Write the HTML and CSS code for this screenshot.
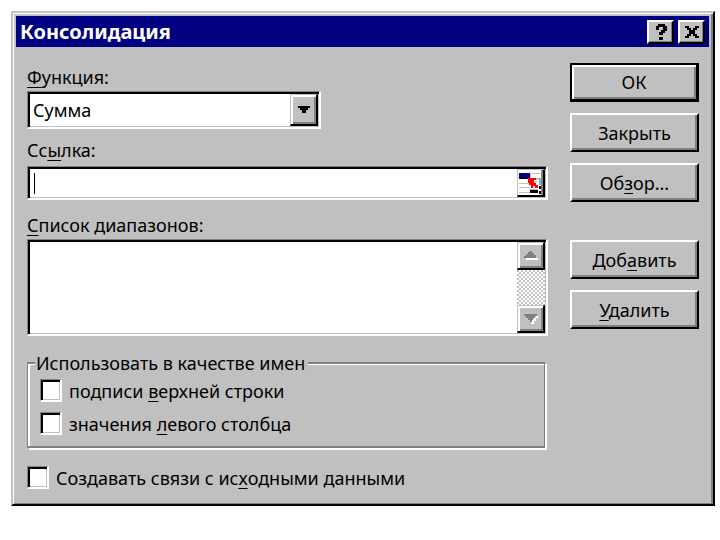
FILE: index.html
```html
<!DOCTYPE html>
<html lang="ru">
<head>
  <meta charset="utf-8">
  <title>Консолидация</title>
  <link rel="stylesheet" href="styles.css">
</head>
<body>
  <form class="window">
    <div class="titlebar">
      <h1 class="title">Консолидация</h1>
      <button type="button" class="title-button" aria-label="Справка">
        <svg width="12" height="16" viewBox="0 0 12 16"><path d="M1 2h2V0h7v2h2v5h-2v2H8v2H4V8h2V6h2V3H4v3H1zM4 13h4v3H4z"/></svg>
      </button>
      <button type="button" class="title-button" aria-label="Закрыть окно">
        <svg width="14" height="12" viewBox="0 0 14 12"><path d="M0 0h4v2h2v2h2V2h2V0h4v2h-2v2h-2v4h2v2h2v2h-4v-2H8V8H6v2H4v2H0v-2h2V8h2V4H2V2H0z"/></svg>
      </button>
    </div>

    <div class="content">
      <div class="fields">
        <label class="label" for="func"><u>Ф</u>ункция:</label>
        <div class="sunken combo">
          <select id="func" class="combo-select">
            <option>Сумма</option>
          </select>
          <button type="button" class="small-button combo-button" aria-label="Открыть список">
            <svg width="12" height="7" viewBox="0 0 12 7"><path d="M0 0h12v2h-2v2H8v3H4V4H2V2H0z"/></svg>
          </button>
        </div>

        <label class="label" for="ref">Сс<u>ы</u>лка:</label>
        <div class="sunken ref">
          <span class="caret"></span>
          <input type="text" id="ref" class="ref-input">
          <button type="button" class="small-button ref-button" aria-label="Свернуть диалог">
            <svg width="25" height="25" viewBox="0 0 25 25">
              <path fill="#fff" d="M0 0h25v25H0z"/>
              <path fill="#000080" d="M1 3h11v5H1z"/>
              <path fill="#000" d="M1 8h11v1H1z"/>
              <path fill="#c0c0c0" d="M1 13h9v1H1zM1 17h11v1H1zM1 22h11v1H1zM12 3h1v6h-1zM14 3h8v1h-8zM18 8h3v2h-3zM11 19h9v1h-9z"/>
              <path fill="#f00" d="M10 8h8v2h-2v3h2v2h2v3h-3v-2h-2v2h-2v-3h-2v-2h-1z"/>
              <path fill="#80c0b0" d="M21 8h2v7h-2zM17 11h2v1h-2z"/>
              <path fill="#000" d="M12 20h8v3h-8zM21 16h2v3h-2zM21 21h2v3h-2z"/>
              <path fill="#808080" d="M23 0h2v25h-2z"/>
            </svg>
          </button>
        </div>

        <label class="label" for="ranges"><u>С</u>писок диапазонов:</label>
        <div class="sunken list">
          <select id="ranges" class="list-select" size="4"></select>
          <div class="scrollbar">
            <button type="button" class="small-button scroll-button" aria-label="Вверх">
              <svg width="14" height="9" viewBox="0 0 14 9"><path fill="#fff" d="M2 7h12v2H2z"/><path fill="#808080" d="M6 0h2v2h2v2h2v3H0V5h2V3h2V1h2z"/></svg>
            </button>
            <button type="button" class="small-button scroll-button" aria-label="Вниз">
              <svg width="14" height="10" viewBox="0 0 14 10"><path fill="#fff" d="M12 2h2v2h-2v3h-2v3H7V7z"/><path fill="#808080" d="M0 0h13v2h-2v2H9v2H8v2H6V6H4V4H2V2H0z"/></svg>
            </button>
          </div>
        </div>

        <fieldset class="group">
          <legend class="legend">Использовать в качестве имен</legend>
          <label class="check"><input type="checkbox" class="sunken box">подписи <u>в</u>ерхней строки</label>
          <label class="check"><input type="checkbox" class="sunken box">значения <u>л</u>евого столбца</label>
        </fieldset>

        <label class="check"><input type="checkbox" class="sunken box">Создавать связи с ис<u>х</u>одными данными</label>
      </div>

      <div class="buttons">
        <button type="submit" class="button default">ОК</button>
        <button type="button" class="button">Закрыть</button>
        <button type="button" class="button">Об<u>з</u>ор...</button>
        <button type="button" class="button add">Доб<u>а</u>вить</button>
        <button type="button" class="button"><u>У</u>далить</button>
      </div>
    </div>
  </form>
</body>
</html>
```

FILE: styles.css
```css
*{
  box-sizing: border-box;
}
body{
  margin: 11px 5px 0 11px;
  background-color: #fff;
  color: #000;
  font: 18px/24px "Noto Sans", "DejaVu Sans", sans-serif;
}
button, input, select{
  margin: 0;
  padding: 0;
  border: 0;
  border-radius: 0;
  outline: 0;
  appearance: none;
  color: #000;
  font: inherit;
}
button{
  background-color: #c0c0c0;
}
svg{
  display: block;
  flex: none;
  shape-rendering: crispEdges;
}
u{
  text-decoration-thickness: 1px;
  text-underline-offset: 3px;
}
.window{
  padding: 3px 2px 14px 3px;
  border: 2px solid;
  border-color: #c0c0c0 #000 #000 #c0c0c0;
  background-color: #c0c0c0;
  box-shadow: inset 1px 1px 0 #fff, inset -2px -1px 0 #808080;
}

/* title */
.titlebar{
  display: flex;
  align-items: center;
  gap: 4px;
  height: 31px;
  margin-right: 2px;
  padding: 0 4px;
  background-color: #000080;
}
.title{
  flex: 1;
  margin: 0;
  color: #fff;
  font-size: 20px;
  font-weight: bold;
}
.title-button{
  display: flex;
  align-items: center;
  justify-content: center;
  width: 27px;
  height: 24px;
  border: 2px solid;
  border-color: #fff #000 #000 #fff;
  box-shadow: inset -1px -1px 0 #808080;
}

.content{
  display: flex;
  gap: 22px;
  padding: 16px 12px 0 11px;
}
.fields{
  flex: 1;
}
.label{
  display: block;
  height: 28px;
  padding-top: 2px;
}
.sunken{
  padding: 2px 1px 1px 2px;
  border: solid;
  border-width: 1px 2px 2px 1px;
  border-color: #808080 #fff #fff #808080;
  background-color: #fff;
  box-shadow: inset 2px 2px 0 #000, inset -1px -1px 0 #c0c0c0;
}
.small-button{
  display: flex;
  align-items: center;
  justify-content: center;
  width: 28px;
  border: solid;
  border-width: 1px 2px 2px 1px;
  border-color: #c0c0c0 #000 #000 #c0c0c0;
  box-shadow: inset 2px 2px 0 #fff, inset -2px -2px 0 #808080;
}

.combo{
  display: flex;
  width: 294px;
  height: 38px;
  margin-bottom: 7px;
}
.combo-select{
  flex: 1;
  padding-left: 3px;
  background-color: #fff;
}
.ref{
  display: flex;
  align-items: center;
  height: 34px;
  margin: 2px 0 11px;
}
.caret{
  width: 1px;
  height: 21px;
  margin-left: 4px;
  background-color: #000;
}
.ref-input{
  flex: 1;
  height: 100%;
  min-width: 0;
}
.ref-button{
  height: 100%;
}
.list{
  display: flex;
  height: 97px;
}
.list-select{
  flex: 1;
  background-color: #fff;
}
.scrollbar{
  display: flex;
  flex-direction: column;
  justify-content: space-between;
  background: repeating-conic-gradient(#fff 0 25%, #c0c0c0 0 50%) 0 0/4px 4px;
}
.scroll-button{
  height: 28px;
}

.group{
  margin: 15px 3px 17px 0;
  padding: 3px 12px 10px;
  border: solid #808080;
  border-width: 2px 1px;
  box-shadow: 2px 2px 0 #fff, inset 2px 1px 0 #fff;
}
.legend{
  margin-left: -5px;
  padding: 0 3px 0 1px;
  background-color: #c0c0c0;
}
.check{
  display: flex;
  align-items: center;
  height: 25px;
  white-space: pre;
}
.check + .check{
  margin-top: 8px;
}
.box{
  width: 22px;
  height: 23px;
  margin-right: 7px;
}

/* buttons */
.buttons{
  display: flex;
  flex-direction: column;
  gap: 11px;
  width: 129px;
}
.button{
  height: 39px;
  border: 2px solid;
  border-color: #fff #000 #000 #fff;
  box-shadow: inset -2px -2px 0 #808080;
}
.default{
  border-width: 2px 3px 3px 2px;
  border-color: #000;
  box-shadow: inset 2px 2px 0 #fff, inset -2px -2px 0 #808080;
}
.add{
  margin-top: 27px;
}
```
